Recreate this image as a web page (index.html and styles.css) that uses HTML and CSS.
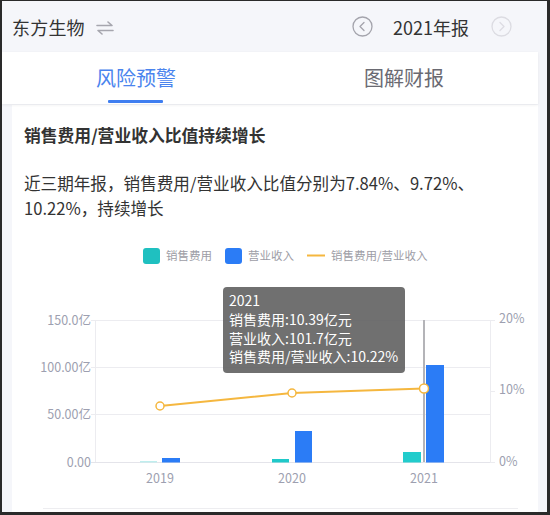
FILE: index.html
```html
<!DOCTYPE html>
<html lang="zh">
<head>
<meta charset="utf-8">
<link rel="stylesheet" href="styles.css">
</head>
<body>
<div class="frame">
  <div class="header">
    <span class="company">东方生物</span>
    <svg class="swap" width="18" height="14" viewBox="0 0 18 14">
      <path d="M1 4.5 H16 L12 1" fill="none" stroke="#a6a6ae" stroke-width="1.6" stroke-linecap="round" stroke-linejoin="round"/>
      <path d="M17 9.5 H2 L6 13" fill="none" stroke="#a6a6ae" stroke-width="1.6" stroke-linecap="round" stroke-linejoin="round"/>
    </svg>
    <div class="period">
      <svg class="nav" width="21" height="21" viewBox="0 0 21 21">
        <circle cx="10.5" cy="10.5" r="9.5" fill="none" stroke="#a4a4ac" stroke-width="1.3"/>
        <path d="M12 6.5 L8 10.5 L12 14.5" fill="none" stroke="#a4a4ac" stroke-width="1.3" stroke-linecap="round" stroke-linejoin="round"/>
      </svg>
      <span class="year">2021年报</span>
      <svg class="nav" width="21" height="21" viewBox="0 0 21 21">
        <circle cx="10.5" cy="10.5" r="9.5" fill="none" stroke="#dcdce2" stroke-width="1.3"/>
        <path d="M9 6.5 L13 10.5 L9 14.5" fill="none" stroke="#dcdce2" stroke-width="1.3" stroke-linecap="round" stroke-linejoin="round"/>
      </svg>
    </div>
  </div>
  <div class="tabs">
    <div class="tab active"><span>风险预警</span></div>
    <div class="tab"><span>图解财报</span></div>
  </div>
  <div class="card">
    <h1 class="card-title">销售费用/营业收入比值持续增长</h1>
    <p class="card-text">近三期年报，销售费用/营业收入比值分别为7.84%、9.72%、10.22%，持续增长</p>
    <div class="chart">
      <svg width="526" height="280" viewBox="0 0 526 280">
        <g transform="translate(-12,-225)">
          <rect x="143" y="248" width="17" height="16" rx="3" fill="#1fc0c0"/>
          <text class="legend" x="166" y="259.5">销售费用</text>
          <rect x="225" y="248" width="17" height="16" rx="3" fill="#2b7cf6"/>
          <text class="legend" x="248" y="259.5">营业收入</text>
          <line x1="307" y1="255.5" x2="325" y2="255.5" stroke="#f5b73f" stroke-width="2"/>
          <text class="legend" x="331" y="259.5">销售费用/营业收入</text>
          <g stroke="#ececf0" stroke-width="1">
            <line x1="95" y1="320.5" x2="490" y2="320.5"/>
            <line x1="95" y1="367.5" x2="490" y2="367.5"/>
            <line x1="95" y1="414.5" x2="490" y2="414.5"/>
            <line x1="91" y1="320.5" x2="95" y2="320.5"/>
            <line x1="91" y1="367.5" x2="95" y2="367.5"/>
            <line x1="91" y1="414.5" x2="95" y2="414.5"/>
            <line x1="490" y1="320.5" x2="495" y2="320.5"/>
            <line x1="490" y1="391.5" x2="495" y2="391.5"/>
            <line x1="490" y1="462.5" x2="495" y2="462.5"/>
            <line x1="95.5" y1="320" x2="95.5" y2="462"/>
            <line x1="490.5" y1="320" x2="490.5" y2="462"/>
          </g>
          <line x1="91" y1="462.5" x2="490" y2="462.5" stroke="#e4e4ea" stroke-width="1"/>
          <text class="axis" x="91" y="324.5" text-anchor="end">150.0亿</text>
          <text class="axis" x="91" y="371.5" text-anchor="end">100.00亿</text>
          <text class="axis" x="91" y="418.5" text-anchor="end">50.00亿</text>
          <text class="axis" x="91" y="466.5" text-anchor="end">0.00</text>
          <text class="axis" x="499" y="322.5">20%</text>
          <text class="axis" x="499" y="393.5">10%</text>
          <text class="axis" x="499" y="465.5">0%</text>
          <text class="axis" x="160" y="482.5" text-anchor="middle">2019</text>
          <text class="axis" x="292" y="482.5" text-anchor="middle">2020</text>
          <text class="axis" x="424" y="482.5" text-anchor="middle">2021</text>
          <line x1="424" y1="320" x2="424" y2="462" stroke="#b4b4b8" stroke-width="2"/>
          <rect x="140" y="461" width="17" height="1.5" fill="#bfeeee"/>
          <rect x="162" y="458" width="18" height="4.5" fill="#2b7cf6"/>
          <rect x="272" y="459" width="17" height="3.5" fill="#1fc9c9"/>
          <rect x="295" y="431" width="17" height="31.5" fill="#2b7cf6"/>
          <rect x="403" y="452" width="18" height="10.5" fill="#22cccc"/>
          <rect x="426" y="365" width="18" height="97.5" fill="#2b7cf6"/>
          <polyline points="160,406 292,393 424,388.5" fill="none" stroke="#f5b73f" stroke-width="2"/>
          <circle cx="160" cy="406" r="4" fill="#fff" stroke="#f5b73f" stroke-width="1.5"/>
          <circle cx="292" cy="393" r="4" fill="#fff" stroke="#f5b73f" stroke-width="1.5"/>
          <circle cx="424" cy="388.5" r="4.5" fill="#fff" stroke="#f5b73f" stroke-width="1.5"/>
        </g>
      </svg>
      <div class="tooltip">
        <div>2021</div>
        <div>销售费用:10.39亿元</div>
        <div>营业收入:101.7亿元</div>
        <div>销售费用/营业收入:10.22%</div>
      </div>
    </div>
    <div class="divider"></div>
  </div>
</div>
</body>
</html>
```

FILE: styles.css
```css
* { box-sizing: border-box; }
body {
  margin: 0;
  font-family: "Noto Sans CJK SC", "Noto Sans", sans-serif;
  color: #333;
}
.frame {
  width: 550px;
  height: 515px;
  border: 2px solid #2a2a2a;
  border-top-width: 1px;
  border-right-width: 3px;
  border-bottom-width: 3px;
  background: #f5f6fa;
  overflow: hidden;
  display: flex;
  flex-direction: column;
}
.header {
  height: 51px;
  flex: none;
  display: flex;
  align-items: center;
  padding: 0 35px 0 10px;
}
.company {
  font-size: 18px;
  color: #333;
  letter-spacing: 0.2px;
}
.swap {
  margin-left: 11px;
  margin-top: 2px;
}
.period {
  margin-left: auto;
  display: flex;
  align-items: center;
}
.year {
  font-size: 18px;
  color: #333;
  margin: 0 22px 0 20px;
}
.tabs {
  width: 536px;
  height: 52px;
  flex: none;
  display: flex;
  background: #fff;
  box-shadow: 0 1px 3px rgba(0, 0, 0, 0.07);
  position: relative;
  z-index: 1;
}
.tab {
  flex: 1;
  display: flex;
  justify-content: center;
  align-items: center;
  font-size: 20px;
  color: #6a6a72;
}
.tab span {
  position: relative;
  line-height: 52px;
}
.tab.active span {
  color: #4a84ee;
}
.tab.active span::after {
  content: "";
  position: absolute;
  left: 12px;
  right: 13px;
  bottom: 1px;
  height: 3px;
  border-radius: 1px;
  background: #3f7ef0;
}
.card {
  margin: 1px 0 0 10px;
  width: 526px;
  flex: 1;
  background: #fff;
  padding: 18px 12px 0;
}
.card-title {
  margin: 0;
  font-size: 16.8px;
  line-height: 24px;
  font-weight: bold;
  color: #333;
}
.card-text {
  margin: 24px 0 0;
  font-size: 16.6px;
  line-height: 25px;
  color: #333;
}
.chart {
  position: relative;
  margin: 4px -12px 0;
  height: 280px;
}
.chart svg {
  display: block;
}
.legend {
  font-size: 11.5px;
  fill: #9d9da6;
}
.axis {
  font-size: 12.5px;
  fill: #9d9fb0;
}
.tooltip {
  position: absolute;
  left: 211px;
  top: 62px;
  width: 182px;
  height: 86px;
  border-radius: 4px;
  background: rgba(92, 92, 92, 0.88);
  color: #fff;
  font-size: 14px;
  line-height: 18.8px;
  padding: 4px 6px 0;
  white-space: nowrap;
}
.divider {
  margin: 3px 8px 0 19px;
  height: 1px;
  background: #ededf0;
}
```
